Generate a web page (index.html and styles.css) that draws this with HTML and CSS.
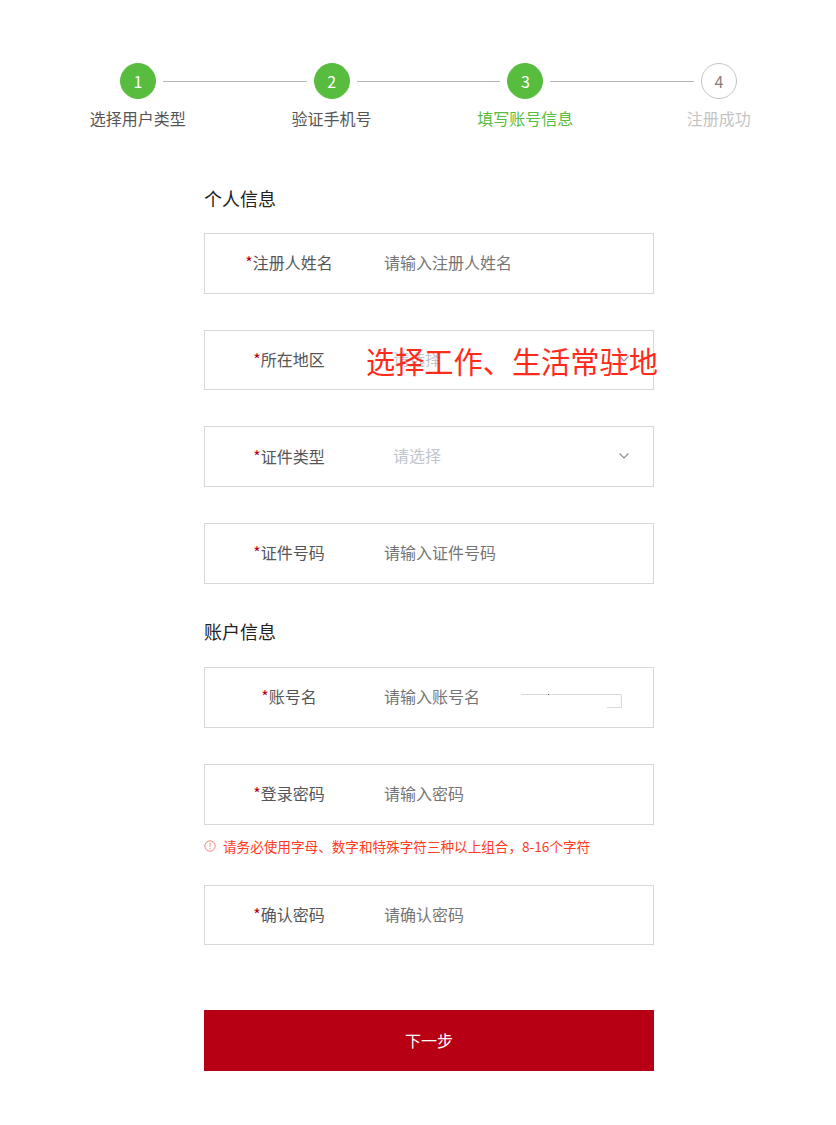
FILE: index.html
```html
<!DOCTYPE html>
<html>
<head>
    <title>注册 - 填写账号信息</title>
    <link rel="stylesheet" href="styles.css">
</head>
<body>
    <div class="steps">
        <div class="step-track">
            <span class="dot done">1</span>
            <span class="track-line"></span>
            <span class="dot done">2</span>
            <span class="track-line"></span>
            <span class="dot done">3</span>
            <span class="track-line"></span>
            <span class="dot">4</span>
        </div>
        <div class="step-labels">
            <span>选择用户类型</span>
            <span>验证手机号</span>
            <span class="current">填写账号信息</span>
            <span class="todo">注册成功</span>
        </div>
    </div>

    <form class="reg-form">
        <h3 class="section-title">个人信息</h3>
        <div class="field">
            <label class="field-label"><i>*</i>注册人姓名</label>
            <input class="field-input" type="text" placeholder="请输入注册人姓名">
        </div>
        <div class="field has-note">
            <label class="field-label"><i>*</i>所在地区</label>
            <div class="field-select">
                <span>请选择</span>
                <svg class="chevron" width="12" height="8" viewBox="0 0 12 8"><path d="M1.500 1.500 6 6l4.500-4.500" fill="none" stroke="#8a8f99" stroke-width="1.200"/></svg>
            </div>
            <div class="region-note">选择工作、生活常驻地</div>
        </div>
        <div class="field">
            <label class="field-label"><i>*</i>证件类型</label>
            <div class="field-select">
                <span>请选择</span>
                <svg class="chevron" width="12" height="8" viewBox="0 0 12 8"><path d="M1.500 1.500 6 6l4.500-4.500" fill="none" stroke="#8a8f99" stroke-width="1.200"/></svg>
            </div>
        </div>
        <div class="field">
            <label class="field-label"><i>*</i>证件号码</label>
            <input class="field-input" type="text" placeholder="请输入证件号码">
        </div>

        <h3 class="section-title second">账户信息</h3>
        <div class="field">
            <label class="field-label"><i>*</i>账号名</label>
            <input class="field-input" type="text" placeholder="请输入账号名">
            <svg class="name-check" width="102" height="14" viewBox="0 0 102 14">
                <path d="M0 .5h100.500V13.500H86" fill="none" stroke="#d9d9d9"/>
                <rect x="27" y="0" width="1" height="1" fill="#555"/>
            </svg>
        </div>
        <div class="field tight">
            <label class="field-label"><i>*</i>登录密码</label>
            <input class="field-input" type="password" placeholder="请输入密码">
        </div>
        <div class="hint">
            <svg width="12" height="12" viewBox="0 0 12 12"><circle cx="6" cy="6" r="5.200" fill="none" stroke="#f58a7c"/><path d="M6 2.800v4M6 8.200v1" stroke="#f58a7c"/></svg>
            <span>请务必使用字母、数字和特殊字符三种以上组合，8-16个字符</span>
        </div>
        <div class="field">
            <label class="field-label"><i>*</i>确认密码</label>
            <input class="field-input" type="password" placeholder="请确认密码">
        </div>

        <button class="next-btn" type="button">下一步</button>
    </form>
</body>
</html>
```

FILE: styles.css
```css
:root {
    --green: #58bc3e;
    --border: #d7d7d7;
    --text: #555;
    --red: #b70014;
}

* {
    box-sizing: border-box;
}

body {
    font-family: "Noto Sans CJK SC", sans-serif;
    margin: 0;
    padding-top: 63px;
    color: var(--text);
    background: white;
}

.step-track {
    display: flex;
    align-items: center;
    width: 617px;
    margin-left: 120px;
}

.dot {
    flex: none;
    width: 36px;
    height: 36px;
    border: 1px solid #c4c4c4;
    border-radius: 50%;
    font-size: 16px;
    line-height: 34px;
    text-align: center;
    color: #8a7f7a;
}

.dot.done {
    border-color: var(--green);
    background: var(--green);
    color: white;
}

.track-line {
    flex: 1;
    height: 1px;
    margin: 0 7px;
    background: #b4b4b4;
}

.step-labels {
    display: grid;
    grid-template-columns: repeat(4, 193.670px);
    margin: 7px 0 0 41px;
    font-size: 16px;
    line-height: 24px;
    text-align: center;
}

.step-labels .current {
    color: var(--green);
}

.step-labels .todo {
    color: #c4c4c4;
}

.reg-form {
    width: 450px;
    margin: 0 0 0 204px;
}

.section-title {
    margin: 0;
    padding-top: 55px;
    font-size: 18px;
    font-weight: 400;
    line-height: 26px;
    height: 103px;
    color: #222;
}

.section-title.second {
    margin-top: -2px;
    padding-top: 0;
    height: 49.300px;
}

.field {
    position: relative;
    display: flex;
    align-items: center;
    height: 60.670px;
    margin-bottom: 36px;
    padding-bottom: 2px;
    border: 1px solid var(--border);
}

.field.tight {
    height: 61px;
    margin-bottom: 0;
}

.field-label {
    flex: none;
    width: 168px;
    font-size: 16px;
    text-align: center;
}

.field-label i {
    font-style: normal;
    color: var(--red);
}

.field-input {
    flex: 1;
    min-width: 0;
    height: 100%;
    margin-left: 11px;
    padding: 0;
    border: none;
    outline: none;
    font-family: inherit;
    font-size: 16px;
    color: var(--text);
    background: transparent;
}

.field-input::placeholder {
    color: #757575;
}

.field-select {
    flex: 1;
    display: flex;
    align-items: center;
    justify-content: space-between;
    padding: 0 23px 0 20px;
    font-size: 16px;
    color: #c0c4cc;
}

.field-select span {
    margin-bottom: 2px;
}

.region-note {
    position: absolute;
    top: 8px;
    left: 161px;
    font-size: 29.200px;
    line-height: 42px;
    white-space: nowrap;
    color: #ff2a1a;
}

.name-check {
    position: absolute;
    top: 26px;
    left: 316px;
}

.hint {
    display: flex;
    align-items: center;
    gap: 7px;
    height: 60px;
    padding-bottom: 18px;
    font-size: 13.600px;
    color: #ff3a1f;
}

.hint svg {
    flex: none;
}

.next-btn {
    display: block;
    width: 450px;
    height: 61px;
    margin-top: 64.300px;
    border: none;
    font-family: inherit;
    font-size: 16px;
    color: white;
    background: var(--red);
    cursor: pointer;
}
```
